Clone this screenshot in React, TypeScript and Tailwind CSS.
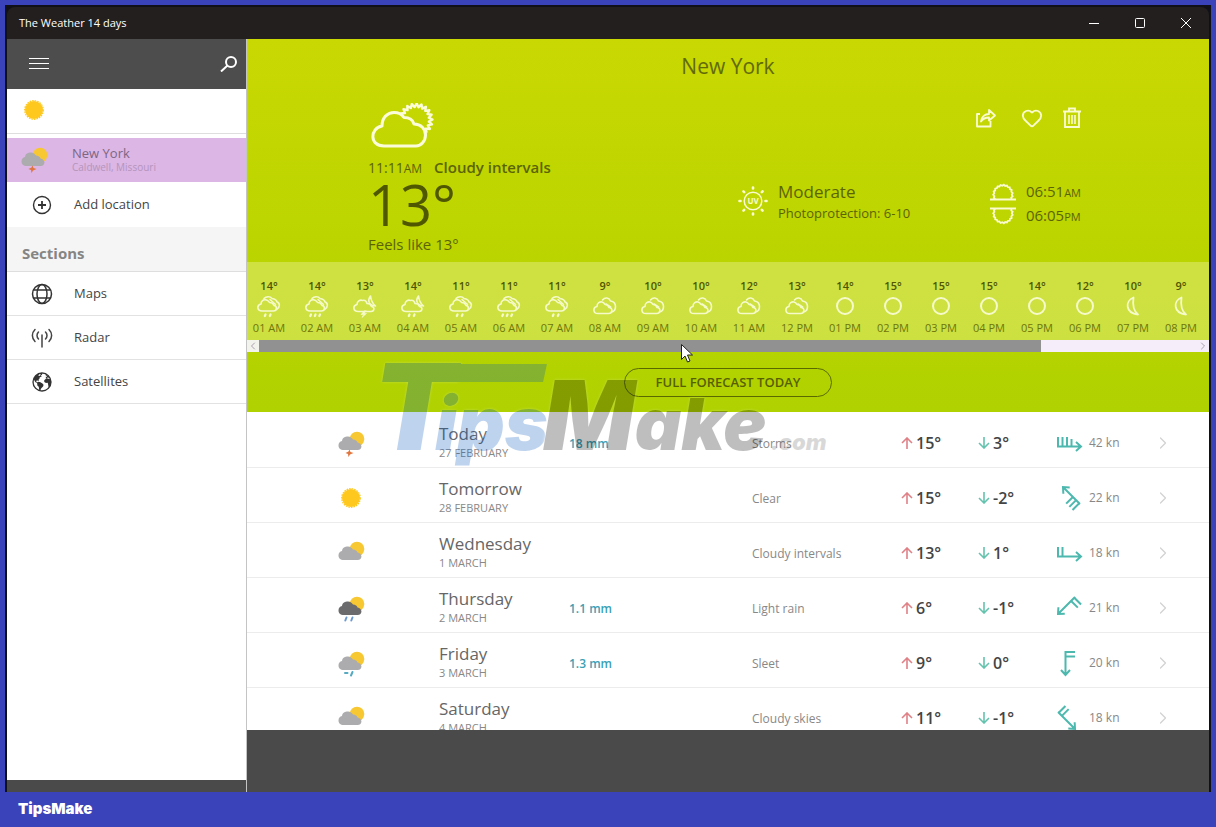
import type { ReactNode } from "react";
import { ChevronLeft, ChevronRight, Heart } from "lucide-react";
import { IoEarth } from "react-icons/io5";

type HourKind = "rain" | "heavy" | "stormNight" | "rainNight" | "cloudy" | "clear" | "moon";
type DayKind = "storm" | "sun" | "cloudy" | "rain" | "sleet";

const HOURS: { temp: number; kind: HourKind; label: string }[] = [
  { temp: 14, kind: "rain", label: "01 AM" },
  { temp: 14, kind: "heavy", label: "02 AM" },
  { temp: 13, kind: "stormNight", label: "03 AM" },
  { temp: 14, kind: "rainNight", label: "04 AM" },
  { temp: 11, kind: "rain", label: "05 AM" },
  { temp: 11, kind: "heavy", label: "06 AM" },
  { temp: 11, kind: "rain", label: "07 AM" },
  { temp: 9, kind: "cloudy", label: "08 AM" },
  { temp: 10, kind: "cloudy", label: "09 AM" },
  { temp: 10, kind: "cloudy", label: "10 AM" },
  { temp: 12, kind: "cloudy", label: "11 AM" },
  { temp: 13, kind: "cloudy", label: "12 PM" },
  { temp: 14, kind: "clear", label: "01 PM" },
  { temp: 15, kind: "clear", label: "02 PM" },
  { temp: 15, kind: "clear", label: "03 PM" },
  { temp: 15, kind: "clear", label: "04 PM" },
  { temp: 14, kind: "clear", label: "05 PM" },
  { temp: 12, kind: "clear", label: "06 PM" },
  { temp: 10, kind: "moon", label: "07 PM" },
  { temp: 9, kind: "moon", label: "08 PM" },
];

const DAYS: {
  name: string;
  date: string;
  kind: DayKind;
  rain?: string;
  sky: string;
  high: number;
  low: number;
  wind: number;
  angle: number;
  barbs: number;
}[] = [
  { name: "Today", date: "27 FEBRUARY", kind: "storm", rain: "18 mm", sky: "Storms", high: 15, low: 3, wind: 42, angle: 0, barbs: 4 },
  { name: "Tomorrow", date: "28 FEBRUARY", kind: "sun", sky: "Clear", high: 15, low: -2, wind: 22, angle: -135, barbs: 3 },
  { name: "Wednesday", date: "1 MARCH", kind: "cloudy", sky: "Cloudy intervals", high: 13, low: 1, wind: 18, angle: 0, barbs: 2 },
  { name: "Thursday", date: "2 MARCH", kind: "rain", rain: "1.1 mm", sky: "Light rain", high: 6, low: -1, wind: 21, angle: 135, barbs: 2 },
  { name: "Friday", date: "3 MARCH", kind: "sleet", rain: "1.3 mm", sky: "Sleet", high: 9, low: 0, wind: 20, angle: 90, barbs: 2 },
  { name: "Saturday", date: "4 MARCH", kind: "cloudy", sky: "Cloudy skies", high: 11, low: -1, wind: 18, angle: 45, barbs: 2 },
];

/* Points of a toothed sun rim between two angles, in degrees */
const rim = (cx: number, cy: number, inner: number, outer: number, from: number, to: number, steps: number) =>
  Array.from({ length: steps + 1 }, (_, i) => {
    const a = ((from + ((to - from) * i) / steps) * Math.PI) / 180;
    const r = i % 2 ? outer : inner;
    return `${(cx + r * Math.cos(a)).toFixed(2)},${(cy + r * Math.sin(a)).toFixed(2)}`;
  }).join(" ");

const HeroCloud = () => (
  <svg className="ml-[3px] h-[46px] w-16" viewBox="0 0 64 46" fill="none" stroke="#fbfcd9" strokeWidth="3" strokeLinejoin="round" aria-hidden="true">
    <path d="M13 43C-2 43-1 25 11 23 11 14 17 9.500 23 9.500c5 0 8 2 10 5 6 0 9 3 10 6.500C50 21 54.500 26 54.500 32S50 43 45 43z" />
    <polyline strokeWidth="2.400" points={rim(45, 17, 13, 16.500, -165, 50, 25)} />
  </svg>
);

const HourIcon = ({ kind }: { kind: HourKind }) => {
  const night = kind === "stormNight" || kind === "rainNight";
  return (
    <svg className="h-6 w-6 shrink-0" viewBox="0 0 24 24" fill="none" stroke="#f6facb" strokeWidth="1.600" strokeLinecap="round" strokeLinejoin="round" aria-hidden="true">
      {kind === "clear" && <circle cx="12" cy="12" r="8" strokeWidth="2" />}
      {kind === "moon" && <path d="M12.500 3.500C4 7 4 19 17 20.500c-5-4-5.500-10-4.500-17z" strokeWidth="1.800" />}
      {kind === "cloudy" && (
        <>
          <path d="M5 19.500c-5.500 0-5-6.500-1-7C4 9 6.500 7.500 9 8c1.500.3 2.500 1.500 3 2.500 2 0 3.500 1.500 4 3 4 0 4 6-.5 6z" />
          <path d="M9.500 6C12 3 16 3.500 17.500 7c3 .5 5 2 5 5.500 0 3-1.500 5-4 5.500M13 10l4.500 3" />
        </>
      )}
      {(kind === "rain" || kind === "heavy") && (
        <>
          <path d="M5 17c-5 0-5.500-6-1-7C4 6.500 7 5 9.500 6c1.500.5 2.500 1.500 3 2.500 2 0 4 1.500 4.500 3 3.500.5 3 5.500-.5 5.500z" />
          <path d="M7 4.500C9 2.500 13 2 15 4.500c3 .5 4.500 1.500 5 3.500 3 1 3.500 5-.5 7.500M13 5.500l5.500 5" />
        </>
      )}
      {night && (
        <>
          <path d="M5 17.500c-5 0-5.500-6-1-7C4 7 7 5.500 9.500 6.500c2.500-1 4 1 4.500 3 2 0 4 1.500 4.500 3 3.500.5 3 5-.5 5z" />
          <path d="M17.500 2c-3.500 4.500-1.500 9.500 5 10-3-2.500-4.500-5.500-5-10z" />
        </>
      )}
      {(kind === "rain" || kind === "rainNight") && <path strokeWidth="2.200" d="M8.500 20.500l-.7 1.500M13.500 20.500l-.7 1.500" />}
      {kind === "heavy" && <path strokeWidth="2.200" d="M6 20.500l-.7 1.500M10.500 20.500l-.7 1.500M15 20.500l-.7 1.500" />}
      {kind === "stormNight" && <path fill="#f6facb" d="M11 17l-3 3.500h2.500L9 23.500l4.500-4h-2.500L13 17z" strokeWidth=".6" />}
    </svg>
  );
};

const DayIcon = ({ kind }: { kind: DayKind }) => (
  <svg className="h-7 w-7" viewBox="0 0 28 28" aria-hidden="true">
    {kind === "sun" ? (
      <>
        <circle cx="14" cy="14" r="9" fill="#ffc81e" />
        <circle cx="14" cy="14" r="9.300" fill="none" stroke="#ffc81e" strokeWidth="1.200" strokeDasharray="1.600 1" />
      </>
    ) : (
      <>
        <circle cx="20" cy="10" r="7.300" fill="#f8c832" />
        <path
          d="M7 21C-.5 21 .5 12.500 5 12c.5-3.500 3-4.500 6-4.500 2.500 0 4 1.500 5 3 2.500.2 4 1.300 4.500 3 5 .5 5.500 7.500 0 7.500z"
          fill={kind === "rain" ? "#6b6b6d" : "#acacae"}
        />
        {kind === "storm" && <path d="M12.500 20.500l-1 2-3 1.500 2.500 1 .5 3 1.500-2.500 3.500-1.500-3-1z" fill="#e0763f" />}
        {kind === "rain" && <path d="M9.500 23.500l-1.200 3M15.500 23.500l-1.200 3" stroke="#6c9ad0" strokeWidth="2" strokeLinecap="round" />}
        {kind === "sleet" && <path d="M8 24h2.500M15.500 23l-1.500 3.500" stroke="#55aabf" strokeWidth="2" strokeLinecap="round" />}
      </>
    )}
  </svg>
);

const WindIcon = ({ angle, barbs }: { angle: number; barbs: number }) => (
  <svg className="h-7 w-7 shrink-0" viewBox="-14 -14 28 28" fill="none" stroke="#4db8ae" strokeWidth="2" aria-hidden="true">
    <g transform={`rotate(${angle})`}>
      <path d="M-12 3.500H11M7-1l5 4.500L7 8" />
      {Array.from({ length: barbs }, (_, i) => (
        <path key={i} d={`M${-11 + i * 4.500} 3.500V${i === 3 ? -4 : -6}`} />
      ))}
    </g>
  </svg>
);

const TrendArrow = ({ up }: { up?: boolean }) => (
  <svg className={`h-3 w-3 shrink-0 ${up ? "text-[#df8187]" : "rotate-180 text-[#63c3ae]"}`} viewBox="0 0 12 12" fill="none" stroke="currentColor" strokeWidth="1.600" aria-hidden="true">
    <path d="M6 12V1M1 6l5-5 5 5" />
  </svg>
);

const SunHorizon = ({ set }: { set?: boolean }) => (
  <svg className={`h-[18px] w-[26px] ${set ? "-scale-y-100" : ""}`} viewBox="0 0 26 18" fill="none" stroke="#fafbd0" strokeWidth="2" aria-hidden="true">
    <path d="M0 16.500h26" />
    <polyline strokeWidth="1.800" points={rim(13, 11.500, 8.800, 9.800, 150, 390, 25)} />
  </svg>
);

const UvIcon = () => (
  <svg className="h-[30px] w-[30px]" viewBox="-15 -15 30 30" fill="none" stroke="#fafbd0" aria-hidden="true">
    <circle r="8.800" strokeWidth="1.500" />
    {[0, 45, 90, 135, 180, 225, 270, 315].map((a) => (
      <path key={a} d="M0-12.500V-13.500" strokeWidth="2.600" strokeLinecap="round" transform={`rotate(${a})`} />
    ))}
    <text y="3" textAnchor="middle" fontSize="8" fontWeight="700" fill="#fafbd0" stroke="none">
      UV
    </text>
  </svg>
);

const MapsIcon = () => (
  <svg className="h-[22px] w-[22px]" viewBox="0 0 22 22" fill="none" stroke="#333" strokeWidth="1.500" aria-hidden="true">
    <circle cx="11" cy="11" r="9.500" />
    <ellipse cx="11" cy="11" rx="5" ry="9.500" />
    <path d="M2.500 7h17M2.500 15h17" />
  </svg>
);

const RadarIcon = () => (
  <svg className="h-[22px] w-[22px]" viewBox="0 0 22 22" fill="none" stroke="#444" strokeWidth="1.500" strokeLinecap="round" aria-hidden="true">
    <path d="M11 8v12M7.500 5c-2 2-2 5 0 7M14.500 5c2 2 2 5 0 7M4 2.500C.5 6 .5 11 4 14.500M18 2.500c3.500 3.500 3.500 8.500 0 12" />
  </svg>
);

const SECTIONS: { name: string; icon: ReactNode }[] = [
  { name: "Maps", icon: <MapsIcon /> },
  { name: "Radar", icon: <RadarIcon /> },
  { name: "Satellites", icon: <IoEarth className="size-[22px] text-[#333]" /> },
];

const TitleBar = () => (
  <header className="flex h-8 shrink-0 items-center justify-between rounded-t-lg bg-[#231f1f] pl-3 text-[11px] text-white">
    <span>The Weather 14 days</span>
    <div className="flex">
      <button aria-label="Minimize" className="flex h-8 w-[46px] items-center justify-center">
        <svg className="size-[10px]" viewBox="0 0 10 10" stroke="currentColor">
          <path d="M0 5.500h10" />
        </svg>
      </button>
      <button aria-label="Maximize" className="flex h-8 w-[46px] items-center justify-center">
        <svg className="size-[10px]" viewBox="0 0 10 10" fill="none" stroke="currentColor">
          <rect x=".5" y=".5" width="9" height="9" rx="1" />
        </svg>
      </button>
      <button aria-label="Close" className="flex h-8 w-[46px] items-center justify-center">
        <svg className="size-[10px]" viewBox="0 0 10 10" stroke="currentColor">
          <path d="M0 0l10 10M10 0L0 10" />
        </svg>
      </button>
    </div>
  </header>
);

const Sidebar = () => (
  <aside className="flex w-60 shrink-0 flex-col border-r border-[#c4c4c4] bg-white">
    <div className="flex h-[50px] shrink-0 items-center justify-between bg-[#4d4d4e] pr-2 pl-[22px] text-white">
      <button aria-label="Menu">
        <svg className="h-3 w-5" viewBox="0 0 20 12" stroke="currentColor">
          <path d="M0 .5h20M0 5.500h20M0 10.500h20" />
        </svg>
      </button>
      <button aria-label="Search">
        <svg className="h-4 w-[18px]" viewBox="0 0 18 16" fill="none" stroke="currentColor" strokeWidth="2">
          <circle cx="11" cy="6" r="5" />
          <path d="M7.500 9.500L1 15.500" />
        </svg>
      </button>
    </div>
    <button aria-label="Current location" className="flex h-[45px] shrink-0 items-center border-b border-[#dedede] pb-[2px] pl-[13px]">
      <DayIcon kind="sun" />
    </button>
    <button className="mt-1 flex h-11 shrink-0 items-center gap-6 bg-[#dcb6e4] pb-[3px] pl-[13px] text-left">
      <DayIcon kind="storm" />
      <span className="flex flex-col">
        <span className="text-[13px] leading-4 text-[#7d6684]">New York</span>
        <span className="text-[10px] leading-3 text-[#b494bc]">Caldwell, Missouri</span>
      </span>
    </button>
    <button className="flex h-[45px] shrink-0 items-center gap-[21px] pl-6 text-[13px] text-[#444]">
      <svg className="size-[22px]" viewBox="-1 -1 22 22" fill="none" stroke="#333" strokeWidth="1.400" aria-hidden="true">
        <circle cx="10" cy="10" r="8.500" />
        <path d="M10 6v8M6 10h8" strokeWidth="1.800" />
      </svg>
      Add location
    </button>
    <h2 className="flex h-[45px] shrink-0 items-end border-b border-[#dedede] bg-[#f5f5f5] px-[15px] pb-2 text-[15px] leading-5 font-bold text-[#858585]">
      Sections
    </h2>
    <nav className="flex-1">
      {SECTIONS.map((section) => (
        <a key={section.name} href={`#${section.name.toLowerCase()}`} className="flex h-11 items-center gap-[21px] border-b border-[#e2e2e2] pl-6 text-[13px] text-[#444]">
          {section.icon}
          {section.name}
        </a>
      ))}
    </nav>
    <div className="h-3 shrink-0 bg-[#4a4a4a]" />
  </aside>
);

const Actions = () => (
  <div className="flex items-center justify-end text-[#fafbd0]">
    <button aria-label="Share">
      <svg className="size-[22px]" viewBox="0 0 22 22" fill="none" stroke="currentColor" strokeWidth="1.800" strokeLinejoin="round">
        <path d="M5 7H2v12.500h13.500V14M6 14.500c.5-5 4-7.500 8-7.500V3l6 5.500-6 5v-3c-4 0-6 1-8 4z" />
      </svg>
    </button>
    <button aria-label="Favourite" className="ml-6">
      <Heart className="size-[22px]" strokeWidth={2} />
    </button>
    <button aria-label="Delete" className="ml-5">
      <svg className="h-[22px] w-[18px]" viewBox="0 0 18 22" fill="none" stroke="currentColor" strokeWidth="1.800">
        <path d="M2 4.500h14v15.500H2zM0 4.500h18M6 3.500V1.500h6v2" />
        <path d="M6 8v9M9 8v9M12 8v9" strokeWidth="1.600" />
      </svg>
    </button>
  </div>
);

const Hero = () => (
  <div className="flex h-[223px] flex-col text-[#5b6400]">
    <h1 className="mt-3 text-center text-[21px] leading-[30px] text-[#626a08]">New York</h1>
    <div className="mt-[22px] flex justify-between pr-32 pl-[121px]">
      <div>
        <HeroCloud />
        <p className="mt-2 flex items-baseline text-[14px] leading-5">
          11:11<span className="text-xs">AM</span>
          <strong className="ml-3 text-[15px] font-semibold">Cloudy intervals</strong>
        </p>
        <p className="text-[56px] leading-[52px] text-[#4f5700]">13°</p>
        <p className="mt-1 text-[15px] leading-5">Feels like 13°</p>
      </div>
      <div className="flex w-[343px] flex-col pt-1">
        <Actions />
        <div className="mt-[46px] flex justify-between">
          <div className="flex items-center gap-[10px]">
            <UvIcon />
            <div>
              <p className="text-[17px] leading-6">Moderate</p>
              <p className="text-[13px] leading-[18px]">Photoprotection: 6-10</p>
            </div>
          </div>
          <div className="flex flex-col gap-1 pt-[7px]">
            <p className="flex items-center gap-[10px] text-[15px] leading-[18px]">
              <SunHorizon />
              <span>
                06:51<span className="text-[11px]">AM</span>
              </span>
            </p>
            <p className="flex items-center gap-[10px] text-[15px] leading-[18px]">
              <SunHorizon set />
              <span>
                06:05<span className="text-[11px]">PM</span>
              </span>
            </p>
          </div>
        </div>
      </div>
    </div>
  </div>
);

const HourStrip = () => (
  <div>
    <ol className="flex h-[78px] gap-4 overflow-hidden bg-[#e3ee80]/50 px-[6px] pt-4">
      {HOURS.map((hour) => (
        <li key={hour.label} className="flex w-8 shrink-0 flex-col items-center whitespace-nowrap">
          <span className="text-[11px] leading-4 font-semibold text-[#4f5700]">{hour.temp}°</span>
          <HourIcon kind={hour.kind} />
          <span className="text-[11px] leading-5 text-[#6d760d]">{hour.label}</span>
        </li>
      ))}
    </ol>
    <div className="flex h-3 bg-[#f5eefa] text-[#a9a0b0]">
      <button aria-label="Scroll left" className="flex w-3 items-center justify-center bg-[#f3f3ee]">
        <ChevronLeft className="size-3" />
      </button>
      <div className="flex-1">
        <div className="h-3 w-5/6 bg-[#919191]" />
      </div>
      <button aria-label="Scroll right" className="flex w-3 items-center justify-center">
        <ChevronRight className="size-3" />
      </button>
    </div>
  </div>
);

const DayList = () => (
  <ul className="min-h-0 flex-1 overflow-hidden bg-white pt-px">
    {DAYS.map((day) => (
      <li key={day.name} className="border-b border-[#ececec]">
        <a
          href={`#${day.name.toLowerCase()}`}
          className="grid h-[54px] grid-cols-[102px_130px_1fr_149px_77px_77px_102px_52px] items-center pt-[6px] pl-[90px] text-[#888]"
        >
          <DayIcon kind={day.kind} />
          <span className="flex flex-col pb-[2px]">
            <span className="text-[17px] leading-[22px] text-[#666]">{day.name}</span>
            <span className="text-[11px] leading-4">{day.date}</span>
          </span>
          <span className="pt-[2px] text-xs font-semibold text-[#3a9fb5]">{day.rain}</span>
          <span className="pt-[2px] text-xs">{day.sky}</span>
          <span className="flex items-center gap-[3px] text-base font-semibold text-[#444]">
            <TrendArrow up />
            {day.high}°
          </span>
          <span className="flex items-center gap-[3px] text-base font-semibold text-[#444]">
            <TrendArrow />
            {day.low}°
          </span>
          <span className="flex items-center gap-[6px] text-xs">
            <WindIcon angle={day.angle} barbs={day.barbs} />
            {day.wind} kn
          </span>
          <ChevronRight className="-ml-1 size-5 text-[#d2d2d2]" strokeWidth={1.5} />
        </a>
      </li>
    ))}
  </ul>
);

/* Translucent site mark lying over the forecast */
const Watermark = () => (
  <div className="pointer-events-none absolute top-[308px] left-[126px] flex items-baseline font-[Inter,sans-serif] leading-[120px] font-black italic opacity-25 [text-shadow:0_0_3px_#fff]">
    <span className="w-[62px] text-[120px] text-[#0055be]">T</span>
    <span className="absolute top-[17px] left-[66px] h-[18px] w-[106px] -skew-x-12 bg-[#0055be]" />
    <span className="w-[108px] text-[74px] text-[#0055be]">ips</span>
    <span className="text-[96px] text-black">M</span>
    <span className="text-[72px] text-black">ake</span>
    <span className="ml-1 text-[22px] text-black/60">.com</span>
  </div>
);

const Cursor = () => (
  <svg className="pointer-events-none absolute top-[305px] left-[434px] h-[19px] w-3" viewBox="0 0 12 19" fill="#fff" stroke="#222" aria-hidden="true">
    <path d="M.5.5v15l3.500-3.500 2.500 6 2.500-1-2.500-6h5z" />
  </svg>
);

export default function App() {
  return (
    <div className="flex h-screen flex-col bg-[#3b43ba] font-['Open_Sans',sans-serif]">
      <div className="flex min-h-0 flex-1 px-[5px] pt-[5px]">
        <div className="flex min-w-0 flex-1 flex-col border-2 border-b-0 border-[#101018] bg-[#101018]">
          <TitleBar />
          <div className="flex min-h-0 flex-1">
            <Sidebar />
            <main className="relative flex min-w-0 flex-1 flex-col">
              <section className="shrink-0 bg-linear-to-b from-[#c9d802] to-[#b0d200]">
                <Hero />
                <HourStrip />
                <div className="flex h-[60px] items-center justify-center">
                  <button className="h-[29px] rounded-full border border-[#5b6a00] px-7 pt-px text-[13px] font-semibold text-[#566000]">
                    <span className="px-[3px]">FULL FORECAST TODAY</span>
                  </button>
                </div>
              </section>
              <DayList />
              <div className="h-[62px] shrink-0 bg-[#4a4a4b]" />
              <Watermark />
              <Cursor />
            </main>
          </div>
        </div>
      </div>
      <footer className="flex h-[35px] shrink-0 items-center px-[18px] font-[Inter,sans-serif] text-[15px] font-black text-white">TipsMake</footer>
    </div>
  );
}
